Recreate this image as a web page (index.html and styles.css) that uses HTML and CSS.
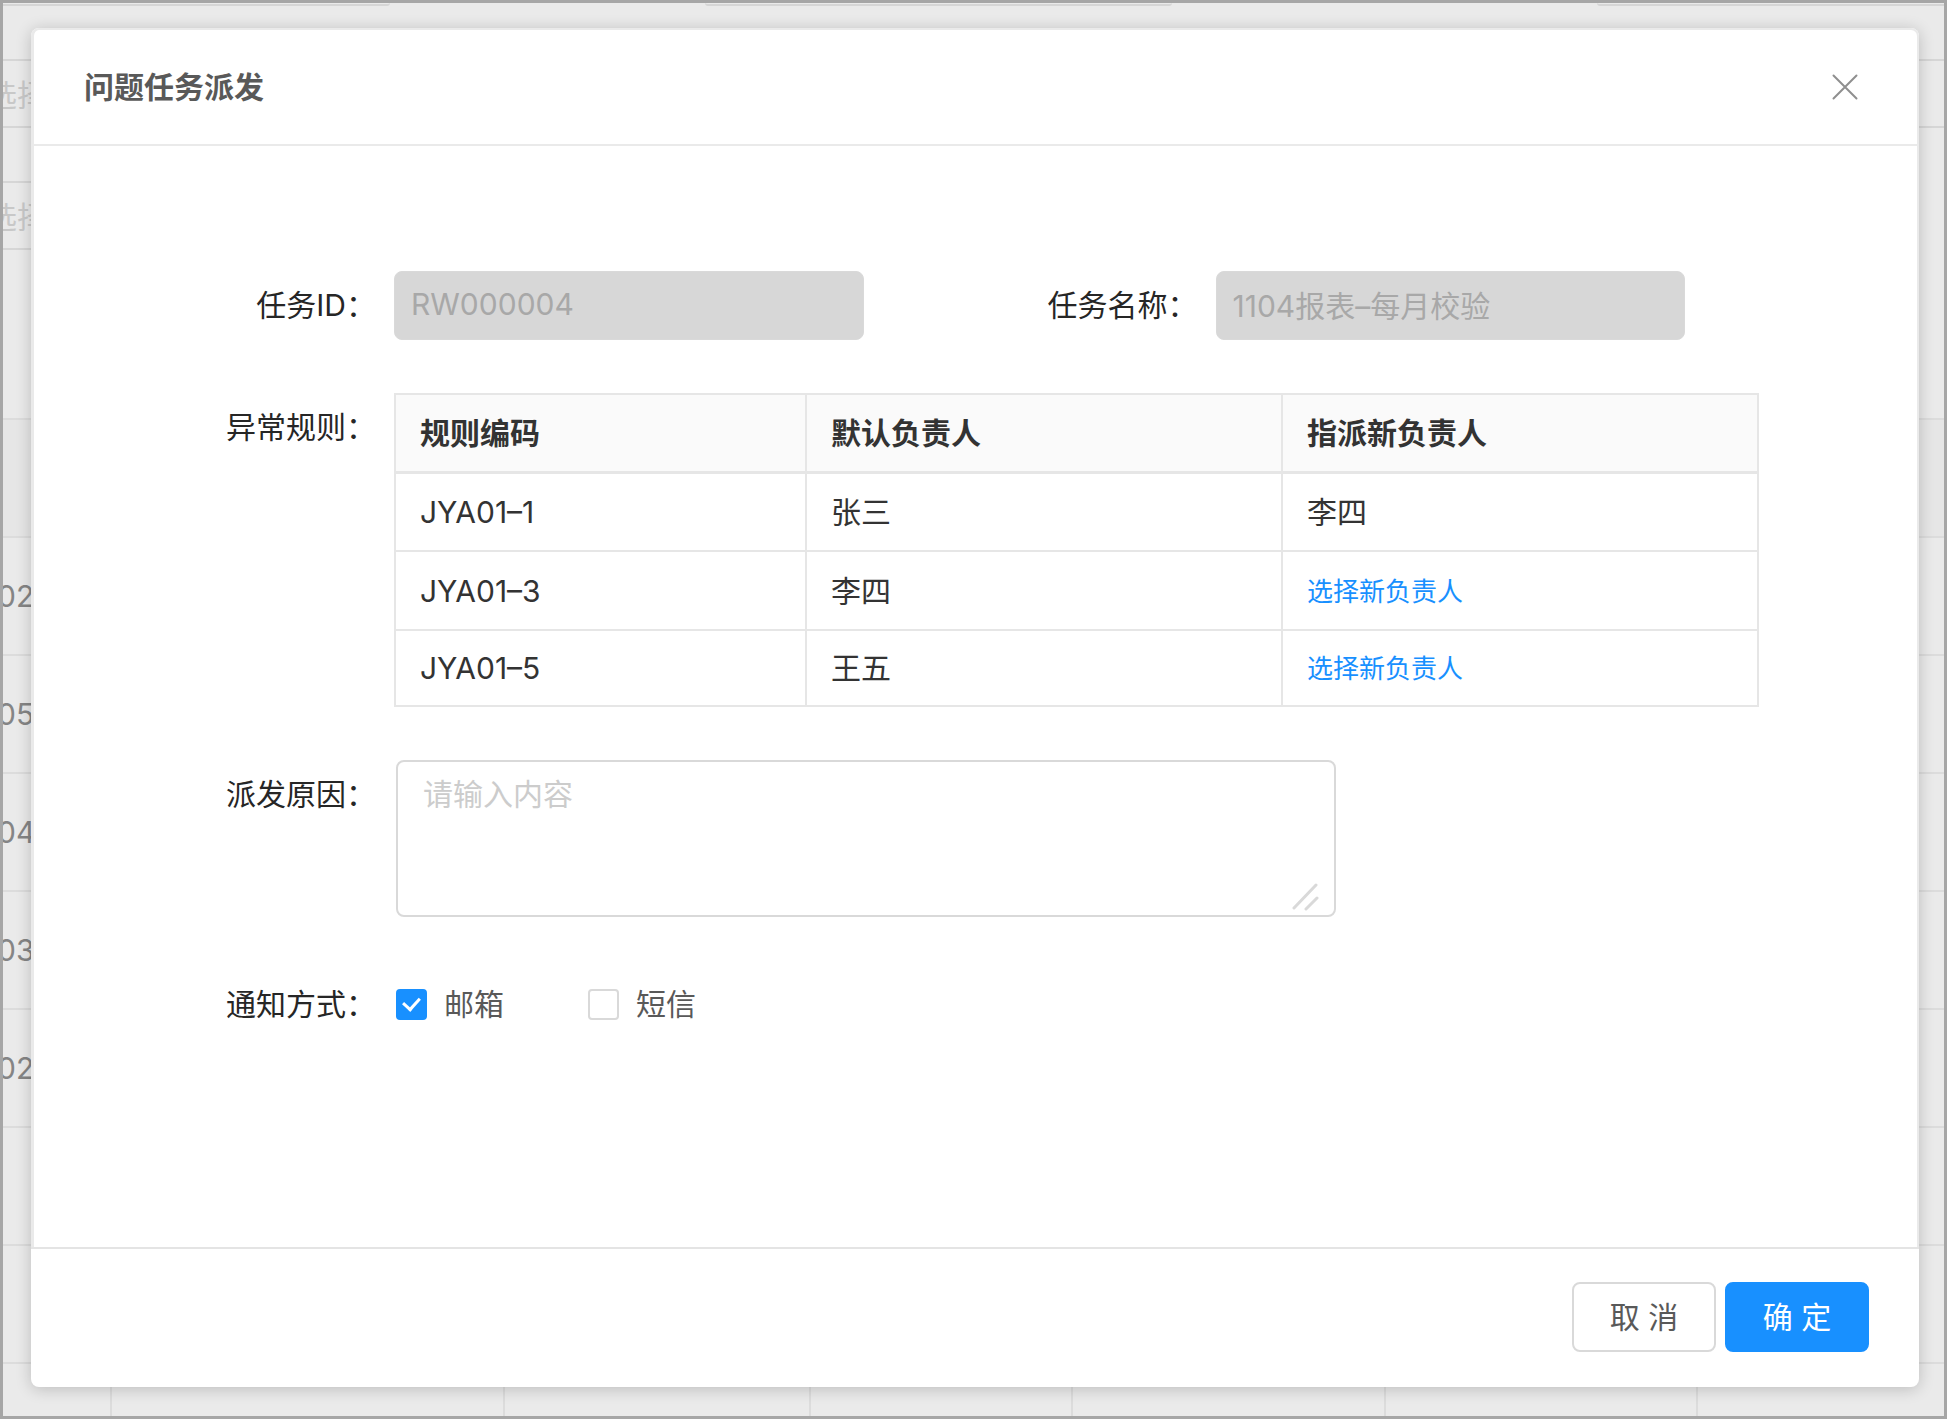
FILE: index.html
```html
<!DOCTYPE html>
<html lang="zh-CN">
<head>
    <meta charset="UTF-8">
    <meta name="viewport" content="width=device-width, initial-scale=1.0">
    <title>问题任务派发</title>
    <link rel="stylesheet" href="styles.css">
</head>
<body>
    <div class="page">
        <!-- 底层列表页 -->
        <div class="backdrop" aria-hidden="true">
            <div class="filter-top">
                <div class="filter-edge"></div>
                <div class="filter-edge filter-edge-mid"></div>
                <div class="filter-edge filter-edge-end"></div>
            </div>
            <div class="filter-row">
                <div class="filter-box">选择</div>
                <div class="filter-box"></div>
            </div>
            <div class="filter-row">
                <div class="filter-box">选择</div>
            </div>
            <table class="list-table">
                <colgroup>
                    <col class="w-167"><col class="w-393"><col class="w-306"><col class="w-262"><col class="w-313"><col class="w-312"><col>
                </colgroup>
                <thead>
                    <tr><th colspan="7"></th></tr>
                </thead>
                <tbody>
                    <tr><td>02</td><td></td><td></td><td></td><td></td><td></td><td></td></tr>
                    <tr><td>05</td><td></td><td></td><td></td><td></td><td></td><td></td></tr>
                    <tr><td>04</td><td></td><td></td><td></td><td></td><td></td><td></td></tr>
                    <tr><td>03</td><td></td><td></td><td></td><td></td><td></td><td></td></tr>
                    <tr><td>02</td><td></td><td></td><td></td><td></td><td></td><td></td></tr>
                    <tr><td></td><td></td><td></td><td></td><td></td><td></td><td></td></tr>
                    <tr><td></td><td></td><td></td><td></td><td></td><td></td><td></td></tr>
                    <tr><td></td><td></td><td></td><td></td><td></td><td></td><td></td></tr>
                </tbody>
            </table>
        </div>

        <!-- 弹窗 -->
        <div class="modal" role="dialog" aria-labelledby="modalTitle">
            <div class="modal-header">
                <h2 class="modal-title" id="modalTitle">问题任务派发</h2>
                <button type="button" class="modal-close" aria-label="关闭">
                    <svg width="26" height="26" viewBox="0 0 26 26" fill="none" stroke="#8f8f8f" stroke-width="2" stroke-linecap="round">
                        <path d="M1.5 1.5L24.5 24.5M24.5 1.5L1.5 24.5"/>
                    </svg>
                </button>
            </div>
            <form class="modal-body">
                <div class="form-row form-row-double">
                    <label class="form-label" for="taskId">任务ID：</label>
                    <input class="form-input" type="text" id="taskId" value="RW000004" disabled>
                    <label class="form-label" for="taskName">任务名称：</label>
                    <input class="form-input" type="text" id="taskName" value="1104报表–每月校验" disabled>
                </div>
                <div class="form-row">
                    <span class="form-label" id="ruleLabel">异常规则：</span>
                    <table class="rule-table" aria-labelledby="ruleLabel">
                        <colgroup>
                            <col class="col-code"><col><col>
                        </colgroup>
                        <thead>
                            <tr><th>规则编码</th><th>默认负责人</th><th>指派新负责人</th></tr>
                        </thead>
                        <tbody>
                            <tr><td>JYA01–1</td><td>张三</td><td>李四</td></tr>
                            <tr><td>JYA01–3</td><td>李四</td><td><a class="link" href="#">选择新负责人</a></td></tr>
                            <tr><td>JYA01–5</td><td>王五</td><td><a class="link" href="#">选择新负责人</a></td></tr>
                        </tbody>
                    </table>
                </div>
                <div class="form-row">
                    <label class="form-label" for="reason">派发原因：</label>
                    <div class="textarea-wrap">
                        <textarea class="form-textarea" id="reason" placeholder="请输入内容"></textarea>
                        <svg class="resize-icon" width="28" height="28" viewBox="0 0 28 28" fill="none" stroke="#d9d9d9" stroke-width="3" stroke-linecap="round">
                            <path d="M2 25L24 2M14 26L25 15"/>
                        </svg>
                    </div>
                </div>
                <div class="form-row">
                    <span class="form-label">通知方式：</span>
                    <div class="check-group">
                        <label class="check"><input type="checkbox" checked>邮箱</label>
                        <label class="check"><input type="checkbox">短信</label>
                    </div>
                </div>
            </form>
            <div class="modal-footer">
                <button type="button" class="btn">取 消</button>
                <button type="button" class="btn btn-primary">确 定</button>
            </div>
        </div>
    </div>
</body>
</html>
```

FILE: styles.css
```css
* {
    box-sizing: border-box;
}
body {
    margin: 0;
    font-family: Inter, "Noto Sans CJK SC", sans-serif;
    font-size: 30px;
    color: #262626;
}
button, input, textarea {
    font-family: inherit;
    font-size: inherit;
}
.page {
    position: relative;
    height: 100vh;
    min-height: 1300px;
    border: 3px solid #a6a6a6;
    background-color: #eaeaea;
    overflow: hidden;
}

/* 底层列表页 */
.filter-top {
    display: flex;
    justify-content: space-between;
    height: 3px;
    margin: 0 -230px 53px -80px;
}
.filter-edge {
    width: 467px;
    border-bottom: 2px solid #d6d6d6;
    border-radius: 0 0 6px 6px;
}
.filter-edge-mid {
    margin-right: 110px;
}
.filter-edge-end {
    width: 577px;
}
.filter-row {
    display: flex;
    justify-content: space-between;
    margin: 0 -120px 53px -80px;
}
.filter-box {
    width: 467px;
    height: 69px;
    padding-left: 62px;
    border: 2px solid #d6d6d6;
    border-radius: 8px;
    line-height: 68px;
    color: #c8c8c8;
}
.list-table {
    width: calc(100% + 120px);
    margin: 168px -60px 0;
    table-layout: fixed;
    border-collapse: collapse;
    color: #858585;
}
.list-table th, .list-table td {
    height: 118px;
    padding: 0 0 0 52px;
    border: 2px solid #dcdcdc;
}
.list-table th {
    background-color: #e6e6e6;
}
.w-167 { width: 167px; }
.w-393 { width: 393px; }
.w-306 { width: 306px; }
.w-262 { width: 262px; }
.w-313 { width: 313px; }
.w-312 { width: 312px; }

/* 弹窗 */
.modal {
    position: absolute;
    top: 25px;
    right: 25px;
    bottom: 29px;
    left: 28px;
    display: flex;
    flex-direction: column;
    background-color: #fff;
    border-radius: 8px;
    box-shadow: 0 2px 16px rgba(0, 0, 0, 0.2);
}
.modal-header {
    display: flex;
    justify-content: space-between;
    align-items: center;
    height: 118px;
    padding: 0 59px 0 50px;
    border: 2px solid #eaeaea;
    border-left-width: 3px;
    border-radius: 8px 8px 0 0;
}
.modal-title {
    margin: 0;
    padding-bottom: 4px;
    font-size: 30px;
    font-weight: 700;
    color: #595959;
}
.modal-close {
    display: flex;
    padding: 0;
    border: none;
    background: none;
    cursor: pointer;
}
.modal-body {
    flex: 1;
    display: flex;
    flex-direction: column;
    gap: 53px;
    padding: 125px 158px 0 190px;
    border-left: 3px solid #eaeaea;
    border-right: 2px solid #eaeaea;
}
.form-row {
    display: grid;
    grid-template-columns: 152px 1fr;
    column-gap: 18px;
    align-items: start;
}
.form-row-double {
    grid-template-columns: 152px 1fr 316px 1fr;
    padding-right: 74px;
}
.form-label {
    line-height: 68px;
    text-align: right;
    white-space: nowrap;
}
.form-input {
    width: 100%;
    height: 69px;
    padding: 0 16px 4px;
    border: 1px solid #d9d9d9;
    border-radius: 8px;
    background-color: #d7d7d7;
    color: #a8a8a8;
}
.rule-table {
    width: 100%;
    table-layout: fixed;
    border-collapse: collapse;
    color: #333;
}
.col-code {
    width: 411px;
}
.rule-table th, .rule-table td {
    height: 79px;
    padding: 0 24px;
    border: 2px solid #e6e6e6;
    line-height: 40px;
    text-align: left;
}
.rule-table th {
    height: 78px;
    background-color: #fafafa;
    border-bottom-width: 3px;
    font-weight: 700;
}
.rule-table tbody tr:last-child td {
    height: 76px;
}
.link {
    font-size: 26px;
    color: #1890ff;
    text-decoration: none;
}
.textarea-wrap {
    position: relative;
    width: 69%;
    max-width: 940px;
    margin-left: 2px;
}
.form-textarea {
    display: block;
    width: 100%;
    height: 157px;
    padding: 10px 25px;
    border: 2px solid #d9d9d9;
    border-radius: 8px;
    line-height: 44px;
    resize: none;
}
.form-textarea::placeholder {
    color: #ccc;
}
.resize-icon {
    position: absolute;
    right: 16px;
    bottom: 6px;
}
.check-group {
    display: flex;
    gap: 84px;
    margin-left: 2px;
    line-height: 68px;
    color: #595959;
}
.check {
    display: flex;
    align-items: center;
    gap: 17px;
}
.check input {
    appearance: none;
    display: flex;
    justify-content: center;
    align-items: center;
    width: 31px;
    height: 31px;
    margin: 0;
    border: 2px solid #d9d9d9;
    border-radius: 4px;
    background-color: #fff;
}
.check input:checked {
    border-color: #1890ff;
    background-color: #1890ff;
}
.check input:checked::after {
    content: "";
    width: 8px;
    height: 13px;
    margin-bottom: 4px;
    border: solid #fff;
    border-width: 0 3px 3px 0;
    transform: rotate(42deg);
}
.modal-footer {
    display: flex;
    justify-content: flex-end;
    gap: 9px;
    padding: 33px 50px 35px;
    border-top: 2px solid #e4e4e4;
}
.btn {
    width: 144px;
    height: 70px;
    padding: 0 0 4px;
    border: 2px solid #d9d9d9;
    border-radius: 8px;
    background-color: #fff;
    color: #595959;
    cursor: pointer;
}
.btn-primary {
    border-color: #1890ff;
    background-color: #1890ff;
    color: #fff;
}
```
